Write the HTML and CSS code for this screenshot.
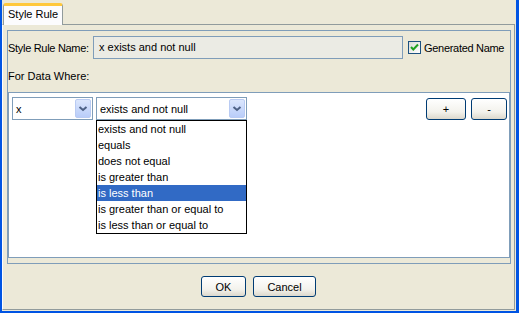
FILE: index.html
```html
<!DOCTYPE html>
<html lang="en">
<head>
    <meta charset="UTF-8">
    <title>Style Rule</title>
    <link rel="stylesheet" href="styles.css">
</head>
<body>
    <div class="frame">
        <div class="tab-strip">
            <div class="tab">Style Rule</div>
        </div>
        <div class="tab-panel">
            <div class="group">
                <div class="name-row">
                    <label class="name-label">Style Rule Name:</label>
                    <div class="name-field">x exists and not null</div>
                    <div class="check">
                        <span class="check-box">
                            <svg width="11" height="11" viewBox="0 0 11 11"><path d="M2 5 L4.3 7.5 L9 2.5" fill="none" stroke="#21a121" stroke-width="2"/></svg>
                        </span>
                        Generated Name
                    </div>
                </div>
                <div class="where-label">For Data Where:</div>
                <div class="rules">
                    <div class="rule-row">
                        <div class="combo combo-var">
                            <span>x</span>
                            <span class="combo-btn"><svg width="16" height="19" viewBox="0 0 16 19"><path d="M4.5 8 L8 11 L11.5 8" fill="none" stroke="#4d6185" stroke-width="2"/></svg></span>
                        </div>
                        <div class="combo-wrap">
                            <div class="combo combo-op">
                                <span>exists and not null</span>
                                <span class="combo-btn"><svg width="16" height="19" viewBox="0 0 16 19"><path d="M4.5 8 L8 11 L11.5 8" fill="none" stroke="#4d6185" stroke-width="2"/></svg></span>
                            </div>
                            <ul class="popup">
                                <li>exists and not null</li>
                                <li>equals</li>
                                <li>does not equal</li>
                                <li>is greater than</li>
                                <li class="selected">is less than</li>
                                <li>is greater than or equal to</li>
                                <li>is less than or equal to</li>
                            </ul>
                        </div>
                        <div class="row-btns">
                            <button class="btn btn-add">+</button>
                            <button class="btn btn-remove">-</button>
                        </div>
                    </div>
                </div>
            </div>
            <div class="dialog-btns">
                <button class="btn btn-ok">OK</button>
                <button class="btn btn-cancel">Cancel</button>
            </div>
        </div>
    </div>
</body>
</html>
```

FILE: styles.css
```css
* {
    box-sizing: border-box;
}
body {
    margin: 0;
    background-color: #ece9d8;
    font-family: "Liberation Sans", Arial, sans-serif;
    font-size: 11px;
    color: #000;
}
.frame {
    width: 519px;
    height: 313px;
    border-left: 2px solid #0054e3;
    border-right: 3px solid #0054e3;
    border-bottom: 2px solid #0054e3;
    display: flex;
    flex-direction: column;
}
.tab-strip {
    height: 24px;
    padding: 3px 0 0 1px;
    display: flex;
}
.tab {
    width: 60px;
    height: 22px;
    background-color: #fcfcfe;
    border: 1px solid #919b9c;
    border-top: 3px solid #ffc83c;
    border-bottom: none;
    border-radius: 3px 3px 0 0;
    padding: 1px 0 0 4px;
    line-height: 14px;
    position: relative;
    z-index: 1;
}
.tab-panel {
    flex: 1;
    margin: 0 1px 1px 0;
    border: 1px solid #919b9c;
    border-left-color: #fcfcfe;
    display: flex;
    flex-direction: column;
}
.group {
    margin: 5px 3px 0 4px;
    border: 1px solid #7f9db9;
    padding: 5px 0;
}
.name-row {
    height: 23px;
    display: flex;
    align-items: center;
}
.name-label {
    width: 85px;
    white-space: nowrap;
    letter-spacing: -0.3px;
}
.name-field {
    width: 310px;
    height: 23px;
    border: 1px solid #7f9db9;
    background-color: #ebebe4;
    padding-left: 5px;
    line-height: 21px;
}
.check {
    margin-left: 5px;
    display: flex;
    align-items: center;
    gap: 3px;
    white-space: nowrap;
    letter-spacing: -0.3px;
}
.check-box {
    width: 13px;
    height: 13px;
    border: 1px solid #1c5180;
    background: linear-gradient(135deg, #dcdcd7, #ffffff);
    display: block;
}
.check-box svg {
    display: block;
}
.where-label {
    height: 33px;
    padding-top: 10px;
    line-height: 14px;
}
.rules {
    height: 166px;
    background-color: #fff;
    border: 1px solid #7f9db9;
    padding: 4px 2px 0 3px;
}
.rule-row {
    display: flex;
    align-items: flex-start;
}
.combo {
    height: 23px;
    border: 1px solid #7f9db9;
    background-color: #fff;
    display: flex;
    align-items: center;
    padding-left: 3px;
}
.combo-var {
    width: 81px;
}
.combo-wrap {
    position: relative;
    margin-left: 3px;
}
.combo-op {
    width: 151px;
}
.combo-btn {
    margin-left: auto;
    margin-right: 1px;
    width: 16px;
    height: 19px;
    border: 1px solid #b9cbf3;
    border-radius: 2px;
    background: linear-gradient(#dbe6fd, #b9cdf9);
    display: block;
}
.combo-btn svg {
    display: block;
    margin: -1px;
}
.popup {
    position: absolute;
    top: 23px;
    left: 0;
    width: 151px;
    margin: 0;
    padding: 0;
    list-style: none;
    background-color: #fff;
    border: 1px solid #000;
    z-index: 2;
}
.popup li {
    height: 16px;
    line-height: 16px;
    padding-left: 1px;
    white-space: nowrap;
}
.popup li.selected {
    background-color: #316ac5;
    color: #fff;
}
.row-btns {
    margin-left: auto;
    margin-top: 1px;
    display: flex;
    gap: 5px;
}
.btn {
    font-family: inherit;
    font-size: 11px;
    color: #000;
    height: 22px;
    padding: 0;
    border: 1px solid #003c74;
    border-radius: 3px;
    background: linear-gradient(#ffffff, #f3f2ec 65%, #dcd8cc);
}
.btn-add {
    width: 40px;
}
.btn-remove {
    width: 36px;
}
.dialog-btns {
    margin-top: 12px;
    display: flex;
    justify-content: center;
    gap: 7px;
}
.btn-ok {
    width: 45px;
    height: 21px;
}
.btn-cancel {
    width: 63px;
    height: 21px;
}
```
